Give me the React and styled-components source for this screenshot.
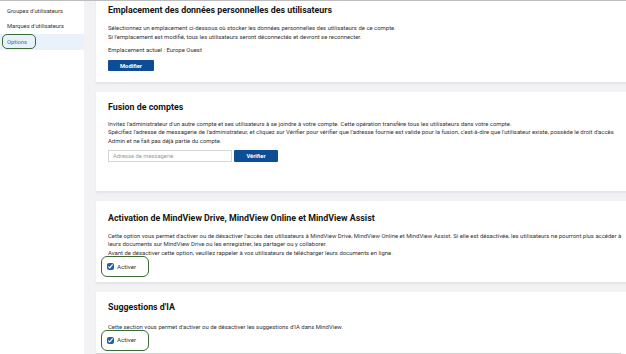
import styled, { createGlobalStyle } from "styled-components";

const GlobalStyle = createGlobalStyle`
  html, body {
    margin: 0;
    padding: 0;
    background: #ffffff;
  }
  body {
    font-family: Roboto, "Liberation Sans", Arial, sans-serif;
    color: #2b2b2b;
    overflow: hidden;
  }
`;

const Page = styled.div`
  width: 626px;
  height: 354px;
  overflow: hidden;
  display: flex;
  border-top: 1px solid #bdbdbd;
  box-sizing: border-box;
`;

const Sidebar = styled.nav`
  width: 84px;
  flex: none;
  background: #ffffff;
  padding-top: 2px;
  display: flex;
  flex-direction: column;
`;

const NavItem = styled.div`
  height: 15.5px;
  display: flex;
  align-items: center;
  padding-left: 7px;
  font-size: 5.8px;
  color: #333;
  background: ${(p) => (p.$active ? "#e9f1fb" : "transparent")};
`;

const NavMark = styled.span`
  display: inline-flex;
  align-items: center;
  height: 15px;
  box-sizing: border-box;
  margin-left: -5px;
  padding: 0 8px 0 4px;
  border: 1.5px solid #3d6b38;
  border-radius: 5px;
  color: #3a6ea8;
`;

const Main = styled.main`
  flex: 1;
  background: #f2f2f4;
  padding-left: 12px;
  display: flex;
  flex-direction: column;
  gap: 9px;
  margin-top: -1px;
`;

const Card = styled.section`
  flex: none;
  display: flex;
  flex-direction: column;
  align-items: flex-start;
  background: #ffffff;
  padding: ${(p) => p.$pt}px 12px ${(p) => p.$pb}px 12px;
  box-shadow: 0 1px 2px rgba(0, 0, 0, 0.06);
  border-bottom: 1px solid #e4e4e6;
`;

const Title = styled.h2`
  margin: 0 0 ${(p) => p.$mb || 6}px;
  font-size: 8.85px;
  line-height: 10px;
  font-weight: 700;
  color: #151515;
  white-space: nowrap;
`;

const Text = styled.p`
  margin: 0 0 ${(p) => p.$mb || 0}px;
  font-size: 5.95px;
  line-height: 8.5px;
  color: #333;
  white-space: nowrap;
`;

const PrimaryButton = styled.button`
  display: block;
  height: ${(p) => p.$h || 11}px;
  width: ${(p) => p.$w}px;
  border: none;
  border-radius: 1px;
  background: #0d4d95;
  color: #fff;
  font-family: inherit;
  font-size: 5.8px;
  font-weight: 700;
  padding: 0;
  cursor: pointer;
`;

const InputRow = styled.div`
  display: flex;
  gap: 2px;
  margin-top: ${(p) => p.$mt}px;
`;

const EmailInput = styled.input`
  width: 124px;
  height: 12px;
  box-sizing: border-box;
  border: 1px solid #d6d6d6;
  padding: 0 4px;
  font-family: inherit;
  font-size: 5.8px;
  color: #333;
  &::placeholder {
    color: #9a9a9a;
  }
`;

const Highlight = styled.label`
  display: flex;
  align-items: center;
  gap: 3px;
  height: 21px;
  box-sizing: border-box;
  margin-left: -7px;
  margin-top: ${(p) => p.$mt}px;
  padding: 0 12px 0 5px;
  border: 1.5px solid #3d6b38;
  border-radius: 6px;
  font-size: 6.2px;
  color: #333;
`;

const Check = styled.input`
  width: 7px;
  height: 7px;
  margin: 0;
  accent-color: #1f5fb0;
`;

const TableHead = styled.div`
  align-self: stretch;
  display: grid;
  grid-template-columns: 205px 1fr;
  margin: 2px 0 0 -12px;
  height: 6px;
  border-top: 1px solid #cfcfcf;
  & > div:first-child {
    border-right: 1px solid #bdbdbd;
  }
`;

export default function App() {
  return (
    <>
      <GlobalStyle />
      <Page>
        <Sidebar>
          <NavItem>Groupes d'utilisateurs</NavItem>
          <NavItem>Marques d'utilisateurs</NavItem>
          <NavItem $active>
            <NavMark>Options</NavMark>
          </NavItem>
        </Sidebar>
        <Main>
          <Card $pt={5} $pb={11}>
            <Title $mb={9}>Emplacement des données personnelles des utilisateurs</Title>
            <Text $mb={5}>
              Sélectionnez un emplacement ci-dessous où stocker les données personnelles des utilisateurs de ce compte.
              <br />
              Si l'emplacement est modifié, tous les utilisateurs seront déconnectés et devront se reconnecter.
            </Text>
            <Text $mb={5.5}>Emplacement actuel : Europe Ouest</Text>
            <PrimaryButton $w={46}>Modifier</PrimaryButton>
          </Card>

          <Card $pt={10} $pb={29}>
            <Title $mb={7.5}>Fusion de comptes</Title>
            <Text>
              Invitez l'administrateur d'un autre compte et ses utilisateurs à se joindre à votre compte. Cette opération transfère tous les utilisateurs dans votre compte.
              <br />
              Spécifiez l'adresse de messagerie de l'administrateur, et cliquez sur Vérifier pour vérifier que l'adresse fournie est valide pour la fusion, c'est-à-dire que l'utilisateur existe, possède le droit d'accès
              <br />
              Admin et ne fait pas déjà partie du compte.
            </Text>
            <InputRow $mt={5}>
              <EmailInput placeholder="Adresse de messagerie" />
              <PrimaryButton $w={44} $h={12}>Vérifier</PrimaryButton>
            </InputRow>
          </Card>

          <Card $pt={12} $pb={5}>
            <Title $mb={8.5}>Activation de MindView Drive, MindView Online et MindView Assist</Title>
            <Text>
              Cette option vous permet d'activer ou de désactiver l'accès des utilisateurs à MindView Drive, MindView Online et MindView Assist. Si elle est désactivée, les utilisateurs ne pourront plus accéder à
              <br />
              leurs documents sur MindView Drive ou les enregistrer, les partager ou y collaborer.
              <br />
              Avant de désactiver cette option, veuillez rappeler à vos utilisateurs de télécharger leurs documents en ligne.
            </Text>
            <Highlight $mt={-1}>
              <Check type="checkbox" defaultChecked />
              Activer
            </Highlight>
          </Card>

          <Card $pt={10} $pb={0}>
            <Title $mb={11}>Suggestions d'IA</Title>
            <Text>Cette section vous permet d'activer ou de désactiver les suggestions d'IA dans MindView.</Text>
            <Highlight $mt={-2}>
              <Check type="checkbox" defaultChecked />
              Activer
            </Highlight>
            <TableHead>
              <div />
              <div />
            </TableHead>
          </Card>
        </Main>
      </Page>
    </>
  );
}
